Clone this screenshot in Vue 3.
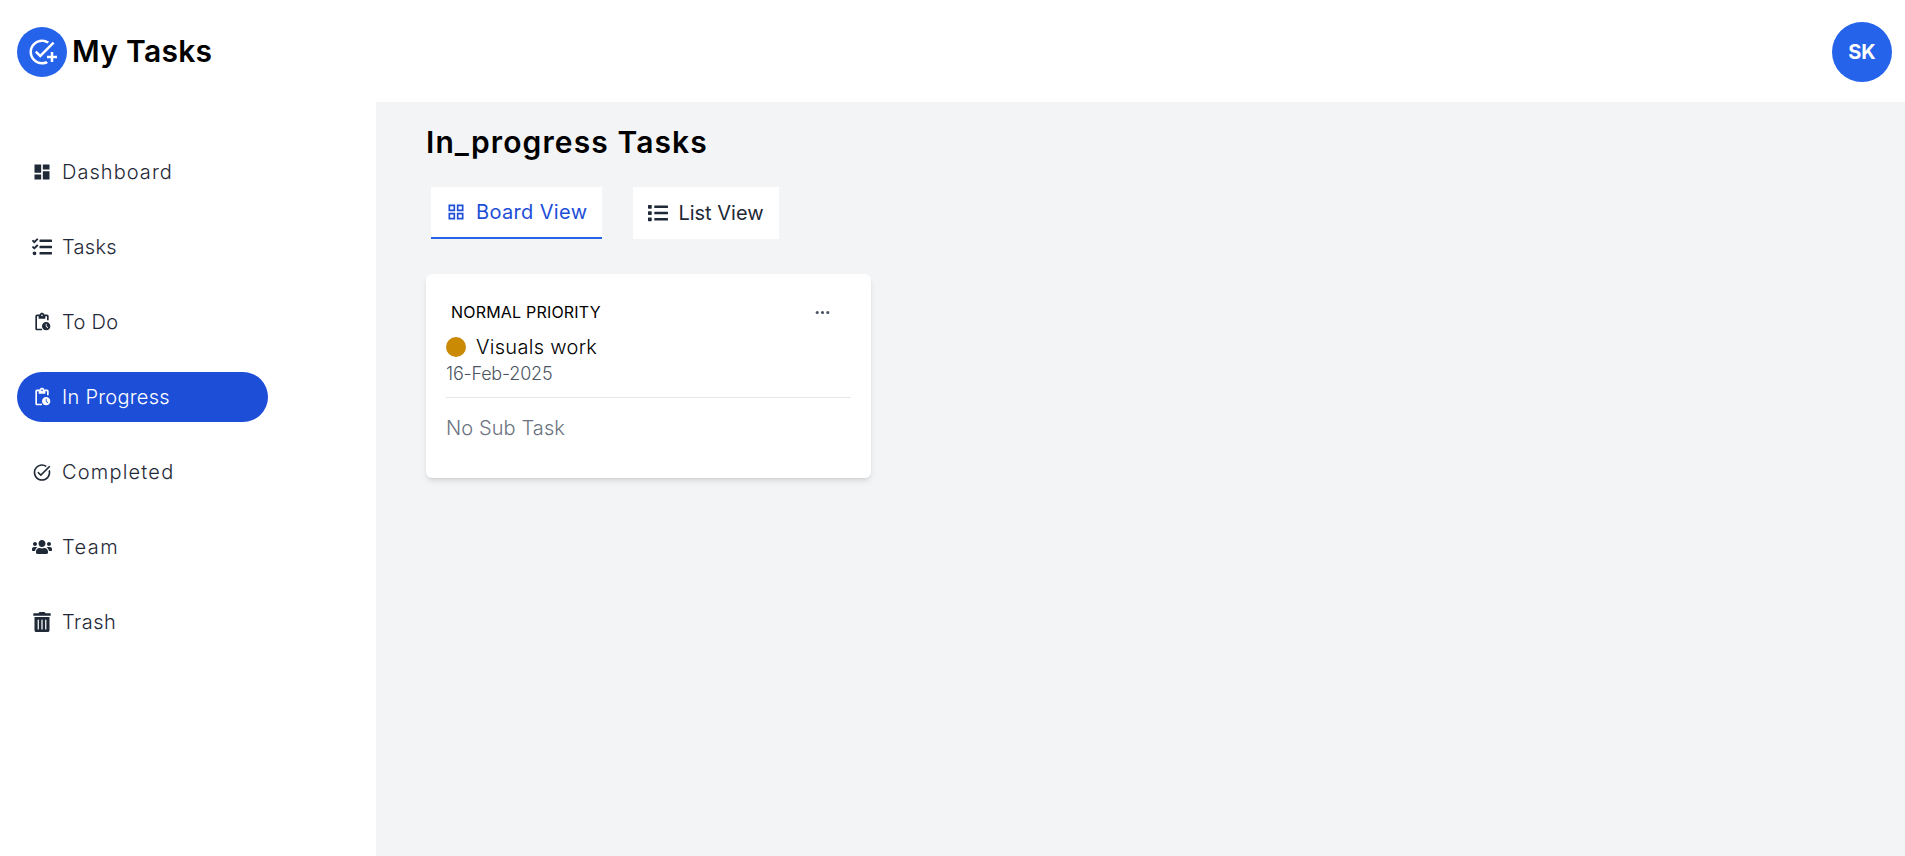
<template>
  <div class="page">
    <header class="topbar">
      <div class="brand">
        <span class="brand-mark">
          <svg viewBox="0 0 24 24" width="30" height="30" fill="currentColor"><path d="M22 5.18 10.59 16.6l-4.24-4.24 1.41-1.41 2.83 2.83 10-10L22 5.18zM12 20c-4.41 0-8-3.59-8-8s3.59-8 8-8c1.57 0 3.04.46 4.28 1.25l1.45-1.45A9.9 9.9 0 0 0 12 2C6.48 2 2 6.48 2 12s4.48 10 10 10c1.73 0 3.36-.44 4.78-1.22l-1.5-1.5c-1 .46-2.11.72-3.28.72zm7-5h-3v2h3v3h2v-3h3v-2h-3v-3h-2v3z" /></svg>
        </span>
        <span class="brand-name">My Tasks</span>
      </div>
      <div class="avatar">SK</div>
    </header>

    <div class="body">
      <aside class="sidebar">
        <nav class="nav">
          <a v-for="item in navItems" :key="item.label" class="nav-item" :class="{ active: item.active }">
            <span class="nav-icon">
              <svg :viewBox="item.box" :width="item.size" :height="item.size" fill="currentColor"><path :d="item.path" /></svg>
            </span>
            <span :style="{ letterSpacing: item.tracking + 'px' }">{{ item.label }}</span>
          </a>
        </nav>
      </aside>

      <main class="content">
        <h1 class="title">In_progress Tasks</h1>

        <div class="tabs">
          <button class="tab tab-board">
            <svg viewBox="0 0 24 24" width="20" height="20" fill="currentColor"><path d="M3 3v8h8V3H3zm6 6H5V5h4v4zm-6 4v8h8v-8H3zm6 6H5v-4h4v4zm4-16v8h8V3h-8zm6 6h-4V5h4v4zm-6 4v8h8v-8h-8zm6 6h-4v-4h4v4z" /></svg>
            Board View
          </button>
          <button class="tab tab-list">
            <svg viewBox="0 0 512 512" width="20" height="20" fill="currentColor"><path d="M80 368H16a16 16 0 0 0-16 16v64a16 16 0 0 0 16 16h64a16 16 0 0 0 16-16v-64a16 16 0 0 0-16-16zm0-320H16A16 16 0 0 0 0 64v64a16 16 0 0 0 16 16h64a16 16 0 0 0 16-16V64a16 16 0 0 0-16-16zm0 160H16a16 16 0 0 0-16 16v64a16 16 0 0 0 16 16h64a16 16 0 0 0 16-16v-64a16 16 0 0 0-16-16zm416 176H176a16 16 0 0 0-16 16v32a16 16 0 0 0 16 16h320a16 16 0 0 0 16-16v-32a16 16 0 0 0-16-16zm0-320H176a16 16 0 0 0-16 16v32a16 16 0 0 0 16 16h320a16 16 0 0 0 16-16V80a16 16 0 0 0-16-16zm0 160H176a16 16 0 0 0-16 16v32a16 16 0 0 0 16 16h320a16 16 0 0 0 16-16v-32a16 16 0 0 0-16-16z" /></svg>
            List View
          </button>
        </div>

        <section class="card">
          <div class="card-top">
            <span class="priority">NORMAL PRIORITY</span>
            <svg class="more" viewBox="0 0 16 16" width="17" height="17" fill="currentColor"><path d="M3 9.5a1.5 1.5 0 1 1 0-3 1.5 1.5 0 0 1 0 3zm5 0a1.5 1.5 0 1 1 0-3 1.5 1.5 0 0 1 0 3zm5 0a1.5 1.5 0 1 1 0-3 1.5 1.5 0 0 1 0 3z" /></svg>
          </div>
          <div class="task-row">
            <span class="task-dot"></span>
            <span class="task-name">Visuals work</span>
          </div>
          <div class="task-date">16-Feb-2025</div>
          <div class="divider"></div>
          <div class="no-sub">No Sub Task</div>
        </section>
      </main>
    </div>
  </div>
</template>

<script setup>
const pendingIcon = 'M17 12c-2.76 0-5 2.24-5 5s2.24 5 5 5 5-2.24 5-5-2.24-5-5-5zm1.65 7.35L16.5 17.2V14h1v2.79l1.85 1.85-.7.71zM18 3h-3.18C14.4 1.84 13.3 1 12 1s-2.4.84-2.82 2H6c-1.1 0-2 .9-2 2v15c0 1.1.9 2 2 2h6v-2H6V5h2v3h8V5h2v5h2V5c0-1.1-.9-2-2-2zm-6 2c-.55 0-1-.45-1-1s.45-1 1-1 1 .45 1 1-.45 1-1 1z';

const navItems = [
  { label: 'Dashboard', tracking: 1.05, box: '0 0 24 24', size: 20, path: 'M3 13h8V3H3v10zm0 8h8v-6H3v6zm10 0h8V11h-8v10zm0-18v6h8V3h-8z' },
  { label: 'Tasks', tracking: 0.3, box: '0 0 512 512', size: 20, path: 'M139.61 35.5a12 12 0 0 0-17 0L58.93 98.81l-22.7-22.12a12 12 0 0 0-17 0L3.53 92.41a12 12 0 0 0 0 17l47.59 47.4a12.78 12.78 0 0 0 17.61 0l15.59-15.62L156.52 69a12.09 12.09 0 0 0 .09-17zm0 159.19a12 12 0 0 0-17 0l-63.68 63.72-22.7-22.1a12 12 0 0 0-17 0L3.53 252a12 12 0 0 0 0 17L51 316.5a12.77 12.77 0 0 0 17.6 0l15.7-15.69 72.2-72.22a12 12 0 0 0 .09-16.9zM64 368c-26.49 0-48.59 21.5-48.59 48S37.53 464 64 464a48 48 0 0 0 0-96zm432 16H208a16 16 0 0 0-16 16v32a16 16 0 0 0 16 16h288a16 16 0 0 0 16-16v-32a16 16 0 0 0-16-16zm0-320H208a16 16 0 0 0-16 16v32a16 16 0 0 0 16 16h288a16 16 0 0 0 16-16V80a16 16 0 0 0-16-16zm0 160H208a16 16 0 0 0-16 16v32a16 16 0 0 0 16 16h288a16 16 0 0 0 16-16v-32a16 16 0 0 0-16-16z' },
  { label: 'To Do', tracking: 0.3, box: '0 0 24 24', size: 20, path: pendingIcon },
  { label: 'In Progress', tracking: 0.25, box: '0 0 24 24', size: 20, path: pendingIcon, active: true },
  { label: 'Completed', tracking: 1.2, box: '0 0 24 24', size: 21, path: 'M22 5.18 10.59 16.6l-4.24-4.24 1.41-1.41 2.83 2.83 10-10L22 5.18zm-2.21 5.04c.13.57.21 1.17.21 1.78 0 4.42-3.58 8-8 8s-8-3.58-8-8 3.58-8 8-8c1.58 0 3.04.46 4.28 1.25l1.44-1.44A9.9 9.9 0 0 0 12 2C6.48 2 2 6.48 2 12s4.48 10 10 10 10-4.48 10-10c0-1.19-.22-2.33-.6-3.39l-1.61 1.61z' },
  { label: 'Team', tracking: 1.4, box: '0 0 640 512', size: 20, path: 'M96 224c35.3 0 64-28.7 64-64s-28.7-64-64-64-64 28.7-64 64 28.7 64 64 64zm448 0c35.3 0 64-28.7 64-64s-28.7-64-64-64-64 28.7-64 64 28.7 64 64 64zm32 32h-64c-17.6 0-33.5 7.1-45.1 18.6 40.3 22.1 68.9 62 75.1 109.4h66c17.7 0 32-14.3 32-32v-32c0-35.3-28.7-64-64-64zm-256 0c61.9 0 112-50.1 112-112S381.9 32 320 32 208 82.1 208 144s50.1 112 112 112zm76.8 32h-8.3c-20.8 10-43.9 16-68.5 16s-47.6-6-68.5-16h-8.3C179.6 288 128 339.6 128 403.2V432c0 26.5 21.5 48 48 48h288c26.5 0 48-21.5 48-48v-28.8c0-63.6-51.6-115.2-115.2-115.2zm-223.7-13.4C161.5 263.1 145.6 256 128 256H64c-35.3 0-64 28.7-64 64v32c0 17.7 14.3 32 32 32h65.9c6.3-47.4 34.9-87.3 75.2-109.4z' },
  { label: 'Trash', tracking: 0.5, box: '0 0 448 512', size: 20, path: 'M32 464a48 48 0 0 0 48 48h288a48 48 0 0 0 48-48V128H32zm272-256a16 16 0 0 1 32 0v224a16 16 0 0 1-32 0zm-96 0a16 16 0 0 1 32 0v224a16 16 0 0 1-32 0zm-96 0a16 16 0 0 1 32 0v224a16 16 0 0 1-32 0zM432 32H312l-9.4-18.7A24 24 0 0 0 281.1 0H166.8a23.72 23.72 0 0 0-21.4 13.3L136 32H16A16 16 0 0 0 0 48v32a16 16 0 0 0 16 16h416a16 16 0 0 0 16-16V48a16 16 0 0 0-16-16z' },
];
</script>

<style>
html, body {
  margin: 0;
  background: #fff;
}
</style>

<style scoped>
.page {
  height: 856px;
  display: flex;
  flex-direction: column;
  font-family: Inter, "Open Sans", sans-serif;
  overflow: hidden;
}

.topbar {
  height: 102px;
  flex-shrink: 0;
  box-sizing: border-box;
  display: flex;
  align-items: center;
  justify-content: space-between;
  padding: 2px 13px 0 17px;
  background: #fff;
}
.brand {
  display: flex;
  align-items: center;
  gap: 5px;
}
.brand-mark {
  width: 50px;
  height: 50px;
  border-radius: 50%;
  background: #2563eb;
  color: #fff;
  display: flex;
  align-items: center;
  justify-content: center;
}
.brand-name {
  margin-bottom: 2px;
  font-size: 30px;
  font-weight: 600;
  letter-spacing: 0.3px;
  color: #000;
}
.avatar {
  width: 60px;
  height: 60px;
  border-radius: 50%;
  background: #2563eb;
  color: #fff;
  font-size: 20px;
  font-weight: 700;
  display: flex;
  align-items: center;
  justify-content: center;
}

.body {
  flex: 1;
  display: flex;
}
.sidebar {
  width: 376px;
  flex-shrink: 0;
  background: #fff;
  padding: 45px 0 0 17px;
  box-sizing: border-box;
}
.nav {
  display: flex;
  flex-direction: column;
  gap: 25px;
  width: 251px;
}
.nav-item {
  height: 50px;
  display: flex;
  align-items: center;
  gap: 10px;
  padding-left: 15px;
  border-radius: 25px;
  font-size: 20px;
  font-weight: 300;
  color: #1f2937;
}
.nav-item.active {
  background: #1d4ed8;
  color: #fff;
}
.nav-icon {
  width: 20px;
  display: flex;
  justify-content: center;
}

.content {
  flex: 1;
  background: #f3f4f6;
  padding: 20px 0 0 50px;
}
.title {
  margin: 0;
  font-size: 30px;
  font-weight: 600;
  line-height: 40px;
  letter-spacing: 1.1px;
  color: #000;
}

.tabs {
  display: flex;
  gap: 31px;
  margin: 25px 0 0 5px;
}
.tab {
  height: 52px;
  display: flex;
  align-items: center;
  gap: 10px;
  border: none;
  background: #fff;
  font-family: inherit;
  font-size: 20px;
  padding: 0 15px;
}
.tab-board {
  color: #1d4ed8;
  letter-spacing: 0.35px;
  border-bottom: 2px solid #2563eb;
}
.tab-list {
  color: #1f2937;
}

.card {
  width: 445px;
  height: 204px;
  box-sizing: border-box;
  margin-top: 35px;
  padding: 27px 20px 0;
  background: #fff;
  border-radius: 6px;
  box-shadow: 0 4px 6px -1px rgba(0, 0, 0, 0.1), 0 2px 4px -2px rgba(0, 0, 0, 0.1);
}
.card-top {
  height: 22px;
  display: flex;
  align-items: center;
  justify-content: space-between;
  padding: 0 20px 0 5px;
}
.priority {
  font-size: 16px;
  letter-spacing: 0.2px;
  color: #000;
}
.more {
  color: #4b5563;
}
.task-row {
  display: flex;
  align-items: center;
  gap: 10px;
  margin-top: 12px;
}
.task-dot {
  width: 20px;
  height: 20px;
  border-radius: 50%;
  background: #ca8a04;
}
.task-name {
  font-size: 20px;
  font-weight: 300;
  letter-spacing: 0.3px;
  color: #000;
}
.task-date {
  font-size: 18px;
  font-weight: 300;
  letter-spacing: -0.2px;
  color: #4b5563;
  margin-top: 4px;
}
.divider {
  height: 1px;
  background: #e5e7eb;
  margin-top: 13px;
}
.no-sub {
  font-size: 20px;
  font-weight: 300;
  letter-spacing: 0.1px;
  color: #6b7280;
  margin-top: 18px;
}
</style>
